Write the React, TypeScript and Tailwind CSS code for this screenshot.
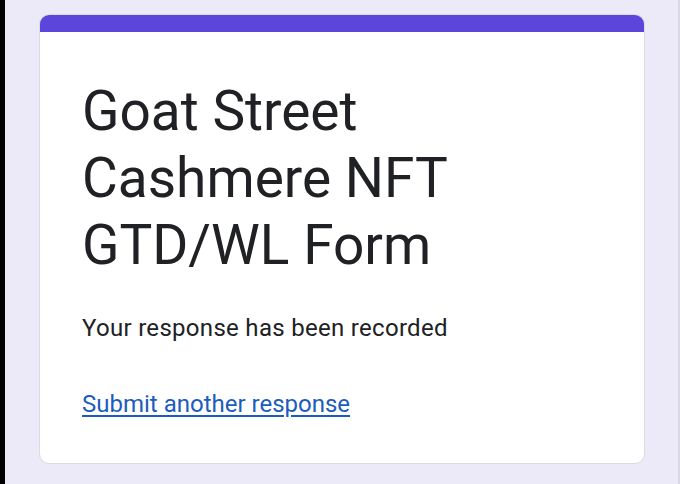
import React from 'react';

export default function App() {
  return (
    <div className="flex h-[484px] w-[680px] border-l-[5px] border-r-2 border-l-black border-r-[#d9d6e6] bg-[#ece9f8] font-['Roboto','Liberation_Sans',sans-serif] text-[#202124]">
      <div className="ml-[34px] mt-[14px] flex h-[450px] w-[606px] flex-col overflow-hidden rounded-[10px] border border-[#dadce0] bg-white">
        <div className="h-[17px] shrink-0 bg-[#5b45da]" />
        <div className="flex flex-col pl-[42px] pt-[46px]">
          <h1 className="text-[55px] font-normal leading-[67px]">
            Goat Street
            <br />
            Cashmere NFT
            <br />
            GTD/WL Form
          </h1>
          <p className="mt-[33px] text-[24px] leading-[32px] tracking-[0.3px]">Your response has been recorded</p>
          <a href="#" className="mt-[44px] self-start text-[24px] leading-[32px] text-[#1c5cbd] underline underline-offset-[3px]">
            Submit another response
          </a>
        </div>
      </div>
    </div>
  );
}
